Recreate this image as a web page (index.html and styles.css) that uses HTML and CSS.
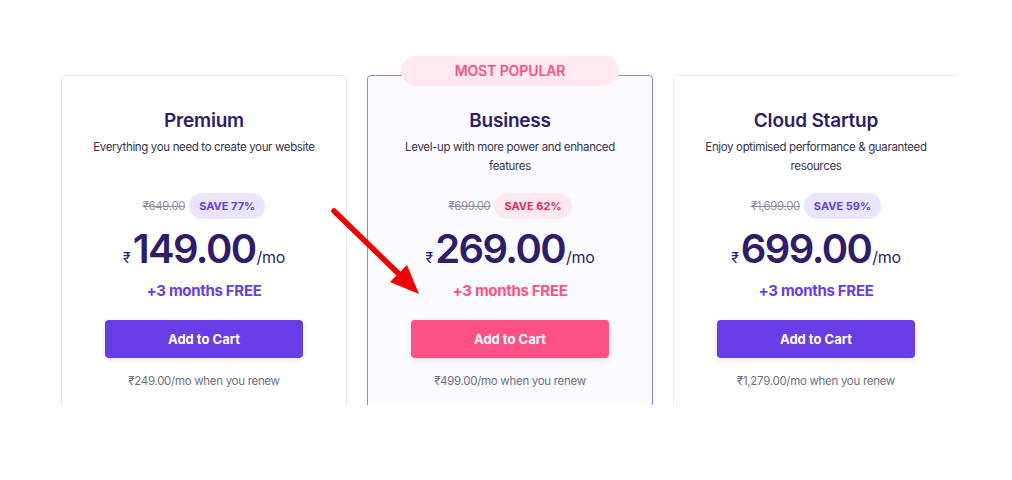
FILE: index.html
```html
<!DOCTYPE html>
<html>
<head>
<meta charset="utf-8">
<link rel="stylesheet" href="styles.css">
</head>
<body>
<div class="page">
  <div class="viewport">
    <div class="cards">
      <div class="card">
        <h2 class="title">Premium</h2>
        <p class="desc">Everything you need to create your website</p>
        <div class="save-row">
          <span class="old">₹649.00</span>
          <span class="save">SAVE 77%</span>
        </div>
        <div class="price"><span class="cur">₹</span><span class="amt">149.00</span><span class="per">/mo</span></div>
        <div class="free">+3 months FREE</div>
        <button class="cart">Add to Cart</button>
        <div class="renew">₹249.00/mo when you renew</div>
      </div>
      <div class="card popular">
        <div class="badge">MOST POPULAR</div>
        <h2 class="title">Business</h2>
        <p class="desc">Level-up with more power and enhanced features</p>
        <div class="save-row">
          <span class="old">₹699.00</span>
          <span class="save">SAVE 62%</span>
        </div>
        <div class="price"><span class="cur">₹</span><span class="amt">269.00</span><span class="per">/mo</span></div>
        <div class="free">+3 months FREE</div>
        <button class="cart">Add to Cart</button>
        <div class="renew">₹499.00/mo when you renew</div>
      </div>
      <div class="card">
        <h2 class="title">Cloud Startup</h2>
        <p class="desc">Enjoy optimised performance &amp; guaranteed resources</p>
        <div class="save-row">
          <span class="old">₹1,699.00</span>
          <span class="save">SAVE 59%</span>
        </div>
        <div class="price"><span class="cur">₹</span><span class="amt">699.00</span><span class="per">/mo</span></div>
        <div class="free">+3 months FREE</div>
        <button class="cart">Add to Cart</button>
        <div class="renew">₹1,279.00/mo when you renew</div>
      </div>
    </div>
  </div>
  <svg class="arrow" width="1012" height="480" viewBox="0 0 1012 480">
    <line x1="334" y1="211" x2="402" y2="277" stroke="#f00000" stroke-width="5.5" stroke-linecap="round"/>
    <polygon points="419,294 390,282 407,265" fill="#f00000"/>
  </svg>
</div>
</body>
</html>
```

FILE: styles.css
```css
* { box-sizing: border-box; }
html, body { margin: 0; padding: 0; background: #fff; }
body { font-family: "Inter", "DejaVu Sans", sans-serif; width: 1012px; height: 480px; overflow: hidden; }
.page { position: relative; width: 1012px; height: 480px; }
.viewport {
  position: relative;
  top: 40px;
  width: 956px;
  height: 365px;
  overflow: hidden;
  padding: 35px 0 0 61px;
}
.cards { display: flex; gap: 20px; align-items: flex-start; }
.card {
  position: relative;
  flex: 0 0 286px;
  width: 286px;
  height: 360px;
  border: 1px solid #e4e8f7;
  border-radius: 4px;
  background: #fff;
  padding: 31px 8px 0;
  text-align: center;
  display: flex;
  flex-direction: column;
  align-items: center;
}
.card.popular { border-color: #8b84fa; background: #fafaff; }
.badge {
  position: absolute;
  top: -20px;
  left: 33px;
  width: 218px;
  height: 30px;
  border-radius: 15px;
  background: #ffe8ef;
  color: #fc5185;
  font-size: 14px;
  font-weight: 600;
  line-height: 30px;
  letter-spacing: -0.1px;
}
.title {
  margin: 0;
  font-size: 19px;
  font-weight: 600;
  line-height: 28px;
  color: #2f1c6a;
  letter-spacing: -0.2px;
}
.desc {
  margin: 3px 0 0;
  width: 244px;
  min-height: 40px;
  font-size: 11.5px;
  line-height: 19px;
  color: #36344d;
  letter-spacing: -0.35px;
}
.save-row {
  margin-top: 15px;
  display: flex;
  align-items: center;
  gap: 4px;
  height: 26px;
}
.old { font-size: 11.5px; color: #8e8fa3; text-decoration: line-through; letter-spacing: -0.4px; }
.save {
  height: 26px;
  line-height: 26px;
  padding: 0 10px;
  border-radius: 13px;
  background: #ebe4ff;
  color: #673de6;
  font-size: 11px;
  font-weight: 700;
}
.popular .save { background: #ffe8ef; color: #d63163; }
.price {
  margin-top: 6px;
  display: flex;
  align-items: baseline;
  color: #2f1c6a;
  height: 48px;
}
.cur { font-size: 14px; margin-right: 2px; }
.amt { font-size: 40px; font-weight: 600; letter-spacing: -1.6px; line-height: 48px; }
.per { font-size: 16px; color: #2f1c6a; margin-left: 1px; letter-spacing: -0.3px; }
.free {
  margin-top: 8px;
  font-size: 15px;
  font-weight: 700;
  color: #673de6;
  line-height: 20px;
  letter-spacing: -0.3px;
}
.popular .free { color: #fc5185; }
.cart {
  margin-top: 19px;
  width: 198px;
  height: 38px;
  border: 0;
  border-radius: 4px;
  background: #673de6;
  color: #fff;
  font-family: inherit;
  font-size: 13px;
  font-weight: 700;
  box-shadow: 0 2px 6px rgba(103, 61, 230, 0.15);
}
.popular .cart { background: #fc5185; box-shadow: 0 2px 6px rgba(252, 81, 133, 0.15); }
.renew {
  margin-top: 15px;
  font-size: 11.5px;
  color: #6d7081;
  line-height: 16px;
  letter-spacing: -0.3px;
}
.arrow { position: absolute; left: 0; top: 0; pointer-events: none; }
```
